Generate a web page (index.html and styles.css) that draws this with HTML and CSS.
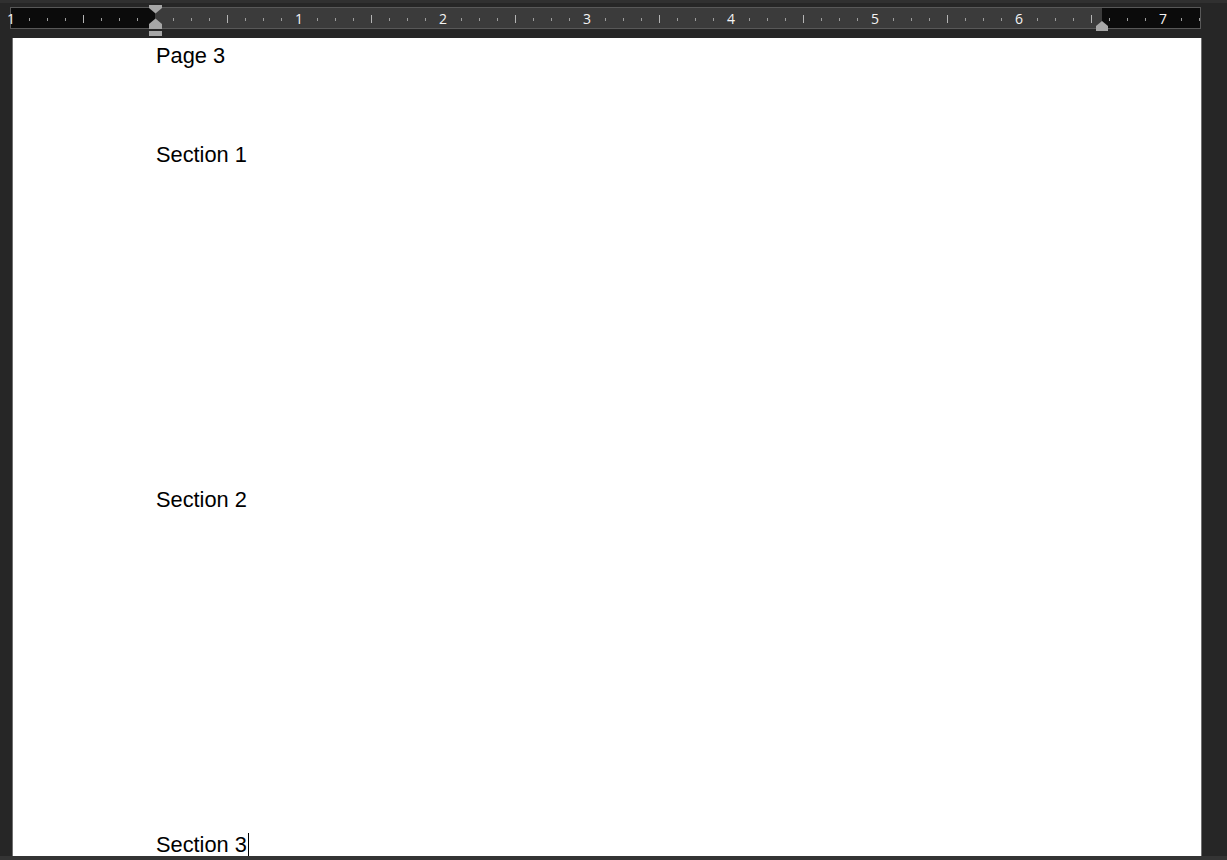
FILE: index.html
```html
<!DOCTYPE html>
<html>
<head>
<meta charset="utf-8">
<link rel="stylesheet" href="styles.css">
</head>
<body>
<div class="topline"></div>
<div class="ruler">
  <div class="seg seg-dark seg-left"></div>
  <div class="seg seg-mid"></div>
  <div class="seg seg-dark seg-right"></div>
  <div class="ticks">
    <span class="c num">1</span><span class="c s"></span><span class="c s"></span><span class="c s"></span><span class="c t"></span><span class="c s"></span><span class="c s"></span><span class="c s"></span>
    <span class="c"></span><span class="c s"></span><span class="c s"></span><span class="c s"></span><span class="c t"></span><span class="c s"></span><span class="c s"></span><span class="c s"></span>
    <span class="c num">1</span><span class="c s"></span><span class="c s"></span><span class="c s"></span><span class="c t"></span><span class="c s"></span><span class="c s"></span><span class="c s"></span>
    <span class="c num">2</span><span class="c s"></span><span class="c s"></span><span class="c s"></span><span class="c t"></span><span class="c s"></span><span class="c s"></span><span class="c s"></span>
    <span class="c num">3</span><span class="c s"></span><span class="c s"></span><span class="c s"></span><span class="c t"></span><span class="c s"></span><span class="c s"></span><span class="c s"></span>
    <span class="c num">4</span><span class="c s"></span><span class="c s"></span><span class="c s"></span><span class="c t"></span><span class="c s"></span><span class="c s"></span><span class="c s"></span>
    <span class="c num">5</span><span class="c s"></span><span class="c s"></span><span class="c s"></span><span class="c t"></span><span class="c s"></span><span class="c s"></span><span class="c s"></span>
    <span class="c num">6</span><span class="c s"></span><span class="c s"></span><span class="c s"></span><span class="c t"></span><span class="c s"></span><span class="c s"></span><span class="c s"></span>
    <span class="c num">7</span><span class="c s"></span><span class="c s"></span>
  </div>
  <svg class="marker-left" width="13" height="32" viewBox="0 0 13 32">
    <polygon points="0,0 13,0 13,3 6.5,8.5 0,3" />
    <polygon points="6.5,13.5 13,19 13,24 0,24 0,19" />
    <rect x="0" y="26" width="13" height="5" />
  </svg>
  <svg class="marker-right" width="12" height="10" viewBox="0 0 12 10">
    <polygon points="6,0 12,5 12,10 0,10 0,5" />
  </svg>
</div>
<div class="page">
  <p class="line">Page 3</p>
  <p class="line sec">Section 1</p>
  <p class="line sec-far">Section 2</p>
  <p class="line sec-far">Section 3<span class="caret"></span></p>
</div>
<div class="bottomline"></div>
</body>
</html>
```
FILE: styles.css
```css
html, body {
  margin: 0;
  padding: 0;
}
body {
  background: #262626;
  width: 1227px;
  height: 860px;
  overflow: hidden;
}
.topline {
  height: 3px;
  background: #303030;
}
.ruler {
  position: relative;
  margin-top: 4px;
  margin-left: 10px;
  width: 1189px;
  height: 20px;
  border: 1px solid #585858;
  display: flex;
}
.seg {
  height: 100%;
}
.seg-dark {
  background: #0b0b0b;
}
.seg-left {
  width: 144px;
}
.seg-mid {
  width: 947px;
  background: #3b3b3b;
}
.seg-right {
  flex: 1;
}
.ticks {
  position: absolute;
  left: -9px;
  top: 2px;
  height: 18px;
  display: flex;
}
.c {
  flex: none;
  width: 18px;
  height: 18px;
  display: flex;
  align-items: center;
  justify-content: center;
}
.s::before {
  content: "";
  width: 1px;
  height: 3px;
  background: #9c9c9c;
}
.t::before {
  content: "";
  width: 1px;
  height: 8px;
  background: #b4b4b4;
}
.num {
  font-family: "Open Sans", "DejaVu Sans", sans-serif;
  font-size: 14px;
  line-height: 18px;
  color: #f4f4f4;
}
.marker-left {
  position: absolute;
  left: 138px;
  top: -3px;
  fill: #a6a6a6;
}
.marker-right {
  position: absolute;
  left: 1085px;
  top: 13px;
  fill: #a6a6a6;
}
.page {
  box-sizing: border-box;
  margin-top: 9px;
  margin-left: 12px;
  width: 1190px;
  height: 818px;
  background: #ffffff;
  border-left: 1px solid #707070;
  border-right: 1px solid #707070;
  padding: 6px 0 0 143px;
  overflow: hidden;
}
.line {
  margin: 0;
  font-family: "Liberation Sans", Arial, sans-serif;
  font-size: 21.8px;
  line-height: 24.64px;
  color: #000;
}
.sec {
  margin-top: 74.36px;
}
.sec-far {
  margin-top: 320.36px;
}
.caret {
  display: inline-block;
  width: 1px;
  height: 24px;
  background: #000;
  margin-left: 1px;
  vertical-align: top;
}
.bottomline {
  height: 4px;
  background: #343434;
}
```
